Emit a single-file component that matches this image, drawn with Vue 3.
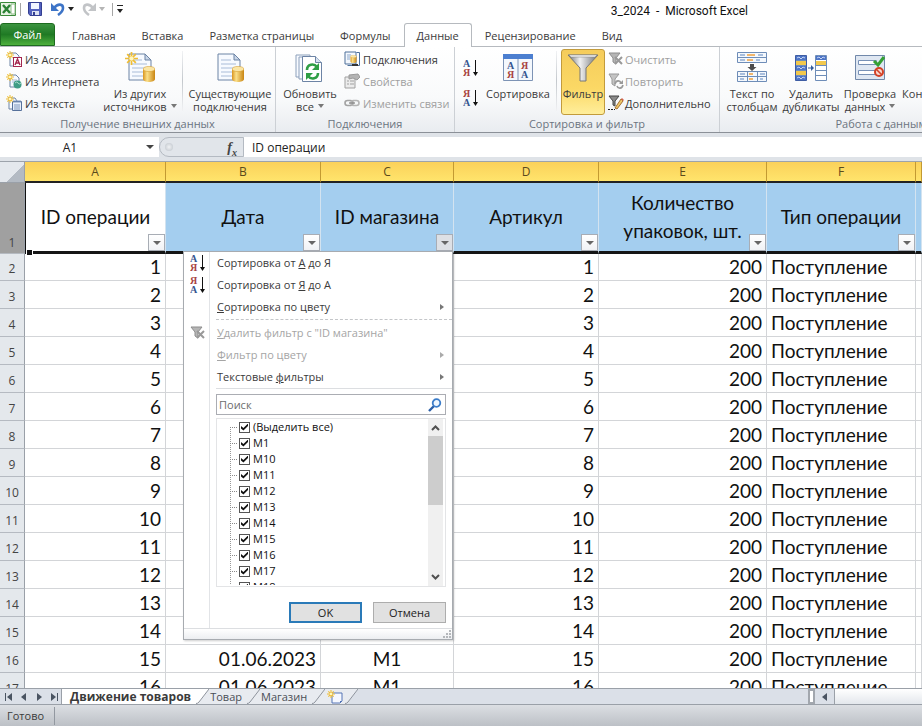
<template>
  <div class="app">
    <svg class="defs" aria-hidden="true">
      <linearGradient id="gold" x1="0" x2="1" y1="0" y2="0">
        <stop offset="0" stop-color="#d9951f" />
        <stop offset="0.35" stop-color="#fbe08a" />
        <stop offset="1" stop-color="#c98512" />
      </linearGradient>
      <linearGradient id="steel" x1="0" x2="1" y1="0" y2="0">
        <stop offset="0" stop-color="#6c6f73" />
        <stop offset="0.4" stop-color="#f1f1f1" />
        <stop offset="1" stop-color="#6f7276" />
      </linearGradient>
      <symbol id="sheet" viewBox="0 0 24 28">
        <path d="M1 1h16l6 6v20H1z" fill="#f7faff" stroke="#6d84a5" />
        <path d="M17 1v6h6z" fill="#c9d6e8" stroke="#6d84a5" />
        <path d="M4 7h10M4 11h15M4 15h15M4 19h15M4 23h15" stroke="#a9bcd8" />
      </symbol>
      <symbol id="cylinder" viewBox="0 0 12 16">
        <path d="M0 3v10c0 4 12 4 12 0V3z" fill="url(#gold)" />
        <ellipse cx="6" cy="3" rx="6" ry="2.6" fill="#fbe6a5" stroke="#d7a136" stroke-width="0.6" />
      </symbol>
      <symbol id="spark" viewBox="0 0 12 12">
        <path d="M6 0v12M0 6h12M2 2l8 8M10 2l-8 8" stroke="#efbd34" stroke-width="1.6" />
        <circle cx="6" cy="6" r="2" fill="#fff6bd" />
      </symbol>
      <symbol id="az" viewBox="0 0 16 18">
        <text x="0" y="8" class="glyph blue">А</text>
        <text x="0" y="17" class="glyph red">Я</text>
        <path d="M12.500 1v13" stroke="#111" />
        <path d="M10 13h5l-2.500 4z" fill="#111" />
      </symbol>
      <symbol id="za" viewBox="0 0 16 18">
        <text x="0" y="8" class="glyph red">Я</text>
        <text x="0" y="17" class="glyph blue">А</text>
        <path d="M12.500 1v13" stroke="#111" />
        <path d="M10 13h5l-2.500 4z" fill="#111" />
      </symbol>
      <symbol id="clear" viewBox="0 0 16 16">
        <path d="M1 2h11L8 7v6l-3-2V7z" fill="#b5b5b5" stroke="#8d8d8d" />
        <path d="M7 6l7 7M14 6l-7 7" stroke="#999" stroke-width="2" />
      </symbol>
      <symbol id="access" viewBox="0 0 16 16">
        <path d="M4 2h6l3 3v10H4z" fill="#f7faff" stroke="#6d84a5" />
        <rect x="7.500" y="6.500" width="8" height="9" fill="#fff" stroke="#a3274f" />
        <path d="M9 14l2.500-6L14 14M10 12h3" stroke="#a3274f" stroke-width="1.4" fill="none" />
        <use href="#spark" width="8" height="8" />
      </symbol>
      <symbol id="web" viewBox="0 0 16 16">
        <path d="M4 2h6l3 3v9H4z" fill="#f7faff" stroke="#6d84a5" />
        <path d="M6 7h5M6 9h4" stroke="#a9bcd8" />
        <circle cx="11.500" cy="11.500" r="4" fill="#3f9c86" />
        <path d="M9 10q2-2 3 0t3 0" stroke="#a9dccb" fill="none" />
        <use href="#spark" width="8" height="8" />
      </symbol>
      <symbol id="txt" viewBox="0 0 16 16">
        <path d="M3 3h6l2 3v8H3z" fill="#f7faff" stroke="#6d84a5" />
        <path d="M6.500 6.500h9v9h-9z" fill="#e8effa" stroke="#56719b" />
        <path d="M8 5v3M10 5v3M12 5v3M14 5v3M8 10h6M8 12h6M8 14h6" stroke="#7f97bd" />
        <use href="#spark" width="8" height="8" />
      </symbol>
      <symbol id="other" viewBox="0 0 32 32">
        <use href="#sheet" x="4" y="2" width="24" height="28" />
        <use href="#cylinder" x="19" y="15" width="12" height="16" />
        <use href="#spark" x="1" y="1" width="13" height="13" />
      </symbol>
      <symbol id="existing" viewBox="0 0 32 32">
        <use href="#sheet" x="3" y="2" width="24" height="28" />
        <use href="#cylinder" x="18" y="15" width="12" height="16" />
      </symbol>
      <symbol id="refresh" viewBox="0 0 32 32">
        <path d="M2 4h14v22H2z" fill="#f7faff" stroke="#8da0bb" />
        <path d="M5 6h14v22H5z" fill="#f7faff" stroke="#8da0bb" />
        <path d="M8.500 5.500h13l6 6v19h-19z" fill="#fff" stroke="#6d84a5" />
        <path d="M21.500 5.500v6h6" fill="#d7e2f0" stroke="#6d84a5" />
        <path d="M13 19c0-6 7-7 10-3" fill="none" stroke="#2f9e45" stroke-width="2.600" />
        <path d="M25 12v7h-7z" fill="#2f9e45" />
        <path d="M24 22c0 6-7 7-10 3" fill="none" stroke="#2f9e45" stroke-width="2.600" />
        <path d="M12 29v-7h7z" fill="#2f9e45" />
      </symbol>
      <symbol id="links" viewBox="0 0 16 16">
        <path d="M1 1h11v12H1z" fill="#f4f8fd" stroke="#4e719b" />
        <path d="M12.500 1.500h3v13h-12" fill="none" stroke="#4e719b" />
        <path d="M3 4h4M3 6h3M3 8h3" stroke="#8ea9cc" />
        <use href="#cylinder" x="6" y="4" width="7" height="8" />
        <path d="M8 14h6" stroke="#333" stroke-width="2" />
      </symbol>
      <symbol id="props" viewBox="0 0 16 16">
        <path d="M1 4h10v11H1z" fill="#ececec" stroke="#a1a1a1" />
        <path d="M3 8h2M6 8h4M3 11h2M6 11h4" stroke="#a1a1a1" />
        <path d="M5 2l9-1 2 3-3 3-4-2-4 1z" fill="#b4b4b4" stroke="#9a9a9a" />
      </symbol>
      <symbol id="chain" viewBox="0 0 16 16">
        <rect x="1" y="5.500" width="8" height="5" rx="2.500" fill="none" stroke="#a3a3a3" stroke-width="1.600" />
        <rect x="7" y="5.500" width="8" height="5" rx="2.500" fill="none" stroke="#b5b5b5" stroke-width="1.600" />
        <path d="M5 8h6" stroke="#8f8f8f" stroke-width="1.400" />
      </symbol>
      <symbol id="sort" viewBox="0 0 32 32">
        <path d="M1.500 3.500h29v26h-29z" fill="#f4f8fd" stroke="#7d93b5" />
        <path d="M1 3h30v5H1z" fill="#4c7fd0" />
        <path d="M16 8v21" stroke="#7d93b5" />
        <text x="5" y="18" class="glyph blue">А</text>
        <text x="5" y="27" class="glyph red">Я</text>
        <text x="19" y="18" class="glyph red">Я</text>
        <text x="19" y="27" class="glyph blue">А</text>
      </symbol>
      <symbol id="funnel" viewBox="0 0 32 32">
        <path d="M1 4h30L19 17v13h-6V17z" fill="url(#steel)" stroke="#777" />
        <path d="M2 4h28l-2 2H4z" fill="#fafafa" stroke="#8b8b8b" stroke-width="0.600" />
      </symbol>
      <symbol id="reapply" viewBox="0 0 16 16">
        <path d="M1 1h10L7 6v7l-3-2V6z" fill="#c4c4c4" stroke="#999" />
        <path d="M7 11c1-4 5-4 6-1M15 12c-1 4-5 4-6 1" stroke="#999" stroke-width="1.600" fill="none" />
        <path d="M15 7v4h-4z" fill="#999" />
      </symbol>
      <symbol id="advanced" viewBox="0 0 16 16">
        <path d="M1 1h10L7 6v5l-2-1V6z" fill="#8a8a8a" stroke="#444" />
        <path d="M7 13l6-9 2 2-6 8z" fill="#edc766" stroke="#a66f31" />
        <path d="M13 4l1-1 2 2-1 1z" fill="#d36250" />
        <path d="M0 14.500h7" stroke="#222" stroke-dasharray="2 1" />
      </symbol>
      <symbol id="columns" viewBox="0 0 32 32">
        <path d="M1.500 1.500h29v10h-29zM1.500 20.500h29v10h-29zM11.500 20v10M21.500 20v10M1 25.500h30M1 6.500h30" fill="#f4f8fd" stroke="#6e8db8" />
        <path d="M4 4h5M4 9h5M22 4h5M20 9h4M4 23h5M4 28h4M24 23h5M24 28h3" stroke="#5e85bd" />
        <path d="M11 4h8M11 9h6M13 23h4M13 28h4" stroke="#f0a03c" stroke-width="1.400" />
        <path d="M14 13h4v3h2.500L16 20l-4.500-4H14z" fill="#4c4c4c" />
      </symbol>
      <symbol id="dupes" viewBox="0 0 32 32">
        <path d="M.5 4.500h11v25H.5z" fill="#4d74c6" stroke="#3e5da4" />
        <path d="M1 10h10v4H1zM1 20h10v4H1z" fill="#f2c84d" />
        <path d="M20.500 4.500h11v25h-11z" fill="#fff" stroke="#6e8db8" />
        <path d="M21 5h10v4H21z" fill="#4d74c6" />
        <path d="M21 10h10v4H21z" fill="#f2c84d" />
        <path d="M21 14.500h10M21 19.500h10M21 24.500h10M1 9.500h10M1 14.500h10M1 19.500h10M1 24.500h10" stroke="#6e8db8" />
        <path d="M2 7l2-1 2 2 2-2 2 1M2 17l2-1 2 2 2-2 2 1M2 27l2-1 2 2 2-2 2 1M22 7l2-1 2 2 2-2 2 1" stroke="#c6d5f3" fill="none" />
        <path d="M13 17h4" stroke="#315b9d" />
        <path d="M16 14l3 3-3 3z" fill="#315b9d" />
      </symbol>
      <symbol id="check" viewBox="0 0 32 32">
        <path d="M1.500 4.500h29v24h-29z" fill="#dfe7f2" stroke="#7188aa" />
        <path d="M4.500 9.500h18v4h-18zM4.500 19.500h18v4h-18z" fill="#fff" stroke="#7891b6" />
        <path d="M20 10l4 4 6-8" fill="none" stroke="#35a035" stroke-width="3" />
        <circle cx="25" cy="21" r="4" fill="#f8d8d0" stroke="#d34126" stroke-width="2" />
        <path d="M22 18l6 6" stroke="#d34126" stroke-width="1.600" />
      </symbol>
    </svg>

    <header class="titlebar">
      <div class="quick">
        <svg class="logo" width="16" height="16" viewBox="0 0 16 16">
          <path d="M.5 1.500h15v13H.5z" fill="#e8f3e4" stroke="#3b8a3a" />
          <path d="M11 3h4v10h-4z" fill="#fff" stroke="#8cbc86" />
          <path d="M3 4l7 8M10 4l-7 8" stroke="#2b8234" stroke-width="2.400" />
        </svg>
        <span class="divider"></span>
        <button class="tool save" aria-label="Сохранить">
          <svg width="14" height="14" viewBox="0 0 14 14">
            <path d="M.5.500h13v13H2l-1.500-2z" fill="#5361bd" stroke="#343f91" />
            <path d="M3 1h8v6H3z" fill="#f1f5ff" />
            <path d="M4 9h7v4H4z" fill="#dce2f2" />
            <path d="M5 10h2v3H5z" fill="#343f91" />
          </svg>
        </button>
        <button class="tool" aria-label="Отменить">
          <svg width="14" height="14" viewBox="0 0 14 14">
            <path d="M3 6c4-5 9-4 9 0 0 3-2 5-5 7" fill="none" stroke="#3d74c7" stroke-width="2.600" />
            <path d="M0 1v8h8z" fill="#3d74c7" />
          </svg>
        </button>
        <span class="caret"></span>
        <button class="tool redo" aria-label="Вернуть">
          <svg width="14" height="14" viewBox="0 0 14 14">
            <path d="M11 6C7 1 2 2 2 6c0 3 2 5 5 7" fill="none" stroke="#c2c4c7" stroke-width="2.600" />
            <path d="M14 1v8H6z" fill="#c2c4c7" />
          </svg>
        </button>
        <span class="caret muted"></span>
        <span class="divider"></span>
        <button class="more" aria-label="Настройка панели"><span class="caret"></span></button>
      </div>
      <h1 class="title">3_2024&nbsp; -&nbsp; Microsoft Excel</h1>
    </header>

    <nav class="tabs">
      <button class="file">Файл</button>
      <button
        v-for="tab in tabs"
        :key="tab"
        class="tab"
        :class="{ active: tab === activeTab }"
        @click="activeTab = tab"
      >{{ tab }}</button>
    </nav>

    <section class="ribbon">
      <div v-for="group in groups" :key="group.title" class="group" :class="group.kind">
        <div class="tools">
          <div v-for="(part, i) in group.parts" :key="i" class="part" :class="part.kind">
            <button
              v-for="b in part.buttons"
              :key="b.icon"
              :class="[part.kind === 'big' ? 'large' : 'small', { pressed: b.pressed }]"
              :disabled="b.disabled"
              :aria-label="b.label"
            >
              <svg class="icon"><use :href="'#' + b.icon" /></svg>
              <span v-if="b.lines" class="caption">
                <span v-for="line in b.lines" :key="line" class="line">{{ line }}</span>
                <i v-if="b.menu" class="arrow"></i>
              </span>
            </button>
          </div>
        </div>
        <div class="group-title">{{ group.title }}</div>
      </div>
    </section>

    <div class="formula-bar">
      <input class="name-box" value="A1" aria-label="Имя" />
      <span class="caret name-caret"></span>
      <div class="fx-area">
        <span class="knob"></span>
        <button class="fx" aria-label="Вставить функцию">f<sub>x</sub></button>
      </div>
      <input class="formula" value="ID операции" aria-label="Строка формул" />
    </div>

    <main class="sheet">
      <table>
        <colgroup>
          <col class="w-num" />
          <col v-for="col in columns" :key="col.letter" :class="'w-' + col.letter.toLowerCase()" />
          <col />
        </colgroup>
        <thead>
          <tr class="letters">
            <th class="corner"></th>
            <th v-for="col in columns" :key="col.letter">{{ col.letter }}</th>
            <th></th>
          </tr>
        </thead>
        <tbody>
          <tr class="head">
            <th class="num">1</th>
            <td v-for="col in columns" :key="col.letter" :class="{ current: col.letter === 'A' }">
              {{ col.name }}
              <button
                class="filter"
                :class="{ open: openFilter === col.letter }"
                :aria-label="'Фильтр: ' + col.name"
                @click="toggleFilter(col.letter)"
              ><span class="arrow"></span></button>

              <div v-if="col.letter === 'C' && openFilter === 'C'" class="menu">
                <div class="menu-body">
                  <button class="item">
                    <svg class="item-icon"><use href="#az" /></svg>
                    <span>Сортировка от <u>А</u> до Я</span>
                  </button>
                  <button class="item">
                    <svg class="item-icon"><use href="#za" /></svg>
                    <span>Сортировка от <u>Я</u> до А</span>
                  </button>
                  <button class="item sub"><span><u>С</u>ортировка по цвету</span></button>
                  <hr class="dashed" />
                  <button class="item" disabled>
                    <svg class="item-icon"><use href="#clear" /></svg>
                    <span><u>У</u>далить фильтр с "ID магазина"</span>
                  </button>
                  <button class="item sub" disabled><span><u>Ф</u>ильтр по цвету</span></button>
                  <button class="item sub"><span>Текстовые <u>ф</u>ильтры</span></button>
                  <hr />
                  <div class="search">
                    <input v-model="query" type="text" placeholder="Поиск" aria-label="Поиск" />
                    <svg width="14" height="14" viewBox="0 0 14 14">
                      <path d="M1 13l5-5" stroke="#2b5fa8" stroke-width="2.400" />
                      <circle cx="8.500" cy="5" r="3.800" fill="#eef6ff" stroke="#3b7cc9" stroke-width="1.800" />
                    </svg>
                  </div>
                  <div class="list">
                    <div class="tree">
                      <label v-for="shop in visibleShops" :key="shop" class="node">
                        <input v-model="checked" type="checkbox" :value="shop" />
                        {{ shop }}
                      </label>
                    </div>
                    <div class="scroll">
                      <svg width="9" height="7" viewBox="0 0 9 7"><path d="M1 5l3.500-3.500L8 5" /></svg>
                      <span class="thumb"></span>
                      <svg width="9" height="7" viewBox="0 0 9 7"><path d="M1 2l3.500 3.500L8 2" /></svg>
                    </div>
                  </div>
                  <div class="actions">
                    <button class="ok">OK</button>
                    <button @click="openFilter = ''">Отмена</button>
                  </div>
                </div>
                <div class="menu-foot">
                  <svg width="8" height="8" viewBox="0 0 8 8">
                    <path d="M6 0h2v2H6zM3 3h2v2H3zM6 3h2v2H6zM0 6h2v2H0zM3 6h2v2H3zM6 6h2v2H6z" fill="#b4b7bb" />
                  </svg>
                </div>
              </div>
            </td>
            <td></td>
          </tr>
          <tr v-for="n in 16" :key="n" class="row">
            <th class="num">{{ n + 1 }}</th>
            <td class="right">{{ n }}</td>
            <td class="right">01.06.2023</td>
            <td class="center">М1</td>
            <td class="right">{{ n }}</td>
            <td class="right">200</td>
            <td>Поступление</td>
            <td></td>
          </tr>
        </tbody>
      </table>
    </main>

    <div class="sheet-tabs">
      <div class="nav">
        <button aria-label="Первый лист"><svg width="8" height="8" viewBox="0 0 8 8"><path d="M0 0h1v8H0zM7 0v8L2 4z" /></svg></button>
        <button aria-label="Предыдущий лист"><svg width="8" height="8" viewBox="0 0 8 8"><path d="M6 0v8L1 4z" /></svg></button>
        <button aria-label="Следующий лист"><svg width="8" height="8" viewBox="0 0 8 8"><path d="M2 0v8l5-4z" /></svg></button>
        <button aria-label="Последний лист"><svg width="8" height="8" viewBox="0 0 8 8"><path d="M7 0h1v8H7zM1 0v8l5-4z" /></svg></button>
      </div>
      <template v-for="name in sheets" :key="name">
        <button class="sheet-tab" :class="{ active: name === activeSheet }" @click="activeSheet = name">{{ name }}</button>
        <svg class="slant" :class="{ active: name === activeSheet }" width="13" height="15" viewBox="0 0 13 15">
          <path class="next" d="M0 0h13v15H0z" />
          <path class="fill" d="M0 0h13L3 13q-1 2-3 2z" />
          <path class="edge" d="M13 0L3 13q-1 1.500-3 1.500" />
        </svg>
      </template>
      <button class="new-sheet" aria-label="Вставить лист">
        <svg width="16" height="14" viewBox="0 0 16 14">
          <path d="M5 3h10v8l-2 2H5z" fill="#f5f8ff" stroke="#5475b5" />
          <path d="M15 11h-2v2z" fill="#5475b5" />
          <use href="#spark" width="8" height="8" />
        </svg>
      </button>
      <svg class="slant" width="13" height="15" viewBox="0 0 13 15">
        <path class="fill" d="M0 0h13L3 13q-1 2-3 2z" />
        <path class="edge" d="M13 0L3 13q-1 1.500-3 1.500" />
      </svg>
      <div class="spacer"></div>
      <div class="hscroll">
        <span class="splitter"></span>
        <button aria-label="Прокрутить влево"><svg width="8" height="8" viewBox="0 0 8 8"><path d="M6 0v8L1 4z" /></svg></button>
        <span class="track"></span>
      </div>
    </div>

    <footer class="status"><span>Готово</span></footer>
  </div>
</template>

<script setup>
import { ref, computed } from 'vue'

const tabs = ['Главная', 'Вставка', 'Разметка страницы', 'Формулы', 'Данные', 'Рецензирование', 'Вид']
const activeTab = ref('Данные')

const small = (icon, label, disabled = false) => ({ icon, label, lines: [label], disabled })
const large = (icon, lines, menu = false, pressed = false) => ({
  icon, lines, menu, pressed, label: lines.join(' ')
})

const groups = [
  {
    title: 'Получение внешних данных',
    kind: 'external',
    parts: [
      { kind: 'stack', buttons: [small('access', 'Из Access'), small('web', 'Из Интернета'), small('txt', 'Из текста')] },
      { kind: 'big', buttons: [large('other', ['Из других', 'источников'], true)] },
      { kind: 'rule', buttons: [] },
      { kind: 'big', buttons: [large('existing', ['Существующие', 'подключения'])] }
    ]
  },
  {
    title: 'Подключения',
    kind: 'connections',
    parts: [
      { kind: 'big', buttons: [large('refresh', ['Обновить', 'все'], true)] },
      { kind: 'stack', buttons: [small('links', 'Подключения'), small('props', 'Свойства', true), small('chain', 'Изменить связи', true)] }
    ]
  },
  {
    title: 'Сортировка и фильтр',
    kind: 'sorting',
    parts: [
      { kind: 'pair', buttons: [{ icon: 'az', label: 'По возрастанию' }, { icon: 'za', label: 'По убыванию' }] },
      { kind: 'big', buttons: [large('sort', ['Сортировка'])] },
      { kind: 'rule', buttons: [] },
      { kind: 'big', buttons: [large('funnel', ['Фильтр'], false, true)] },
      { kind: 'stack', buttons: [small('clear', 'Очистить', true), small('reapply', 'Повторить', true), small('advanced', 'Дополнительно')] }
    ]
  },
  {
    title: 'Работа с данными',
    kind: 'data',
    parts: [
      {
        kind: 'big',
        buttons: [
          large('columns', ['Текст по', 'столбцам']),
          large('dupes', ['Удалить', 'дубликаты']),
          large('check', ['Проверка', 'данных'], true),
          large('consolidate', ['Консолидация'])
        ]
      }
    ]
  }
]

const columns = [
  { letter: 'A', name: 'ID операции' },
  { letter: 'B', name: 'Дата' },
  { letter: 'C', name: 'ID магазина' },
  { letter: 'D', name: 'Артикул' },
  { letter: 'E', name: 'Количество упаковок, шт.' },
  { letter: 'F', name: 'Тип операции' }
]

const openFilter = ref('C')
const toggleFilter = (letter) => {
  openFilter.value = openFilter.value === letter ? '' : letter
}

const shops = ['(Выделить все)', 'М1', 'М10', 'М11', 'М12', 'М13', 'М14', 'М15', 'М16', 'М17', 'М18']
const checked = ref([...shops])
const query = ref('')
const visibleShops = computed(() => shops.filter((s) => s.toLowerCase().includes(query.value.toLowerCase())))

const sheets = ['Движение товаров', 'Товар', 'Магазин']
const activeSheet = ref('Движение товаров')
</script>

<style>
body {
  margin: 0;
}
</style>

<style scoped>
.app {
  display: flex;
  flex-direction: column;
  height: 100vh;
  overflow: hidden;
  background: #fff;
  color: #3b3b3b;
  font-family: "Open Sans", "Noto Sans", sans-serif;
  font-size: 11px;
  line-height: 13px;
}

.app * {
  box-sizing: border-box;
}

button,
input {
  margin: 0;
  padding: 0;
  border: none;
  outline: none;
  background: none;
  color: inherit;
  font: inherit;
}

.defs {
  position: absolute;
  width: 0;
  height: 0;
}

.glyph {
  font-family: "Liberation Serif", serif;
  font-size: 10px;
  font-weight: bold;
}

.glyph.blue {
  fill: #35558f;
}

.glyph.red {
  fill: #a8443f;
}

.caret,
.arrow {
  display: inline-block;
  flex-shrink: 0;
  width: 0;
  height: 0;
  border: 3px solid transparent;
  border-top: 4px solid #222;
  border-bottom: none;
}

.caret.muted {
  border-top-color: #b5b5b5;
}

/* title bar */
.titlebar {
  display: flex;
  align-items: center;
  flex-shrink: 0;
  height: 23px;
}

.quick {
  display: flex;
  align-items: center;
  align-self: flex-start;
  height: 18px;
}

.tool,
.logo,
.tool svg {
  display: block;
}

.divider {
  width: 1px;
  height: 13px;
  margin: 0 7px 0 4px;
  background: #a5a5a5;
}

.tool.save {
  margin-right: 9px;
}

.tool + .caret {
  margin-left: 3px;
}

.tool.redo {
  margin-left: 8px;
}

.caret.muted + .divider {
  margin-left: 7px;
  margin-right: 4px;
}

.more {
  display: flex;
  padding-top: 3px;
  border-top: 1px solid #222;
}

.title {
  flex: 1;
  margin: 0;
  padding-right: 174px;
  color: #111;
  font-family: Roboto, sans-serif;
  font-size: 12px;
  font-weight: normal;
  text-align: right;
}

/* ribbon tabs */
.tabs {
  display: flex;
  flex-shrink: 0;
  height: 24px;
  border-bottom: 1px solid #b6babf;
}

.tab {
  height: 24px;
  padding: 0 12px;
  border: 1px solid transparent;
  border-bottom: none;
  white-space: nowrap;
}

.tab.active {
  border-color: #b6babf;
  border-radius: 3px 3px 0 0;
  background: #fff;
}

.file {
  width: 55px;
  margin-right: 4px;
  border: 1px solid #1d6b1f;
  border-radius: 3px 3px 0 0;
  background: linear-gradient(#3c9440, #1f7a24 50%, #4db03c);
  color: #fff;
}

/* ribbon */
.ribbon {
  display: flex;
  flex-shrink: 0;
  height: 86px;
  overflow: hidden;
  border-bottom: 1px solid #8b9097;
  background: linear-gradient(#fff, #f9fafb 60%, #e9ecf0);
}

.group {
  display: flex;
  flex-direction: column;
  flex-shrink: 0;
  border-right: 1px solid #ccd0d5;
}

.group.external {
  width: 276px;
}

.group.connections {
  width: 179px;
}

.group.sorting {
  width: 265px;
}

.group.data {
  width: 330px;
}

.tools {
  display: flex;
  flex: 1;
  padding-top: 1px;
}

.group-title {
  height: 15px;
  color: #6b7480;
  text-align: center;
}

.part {
  display: flex;
}

.part.stack,
.part.pair {
  flex-direction: column;
}

.external .stack {
  width: 102px;
  padding-left: 6px;
}

.pair {
  width: 29px;
  padding: 5px 0 0 8px;
}

.part.rule {
  width: 1px;
  height: 60px;
  margin: 3px 4px;
  background: linear-gradient(#f1f2f4, #c4c8cd, #f1f2f4);
}

.small {
  display: flex;
  align-items: center;
  gap: 3px;
  height: 22px;
  white-space: nowrap;
}

.sorting .small {
  gap: 1px;
}

.small .icon {
  width: 16px;
  height: 16px;
  flex-shrink: 0;
}

.pair .small {
  height: 30px;
}

.pair .icon {
  height: 18px;
}

.small:disabled {
  color: #a0a0a0;
}

.large {
  display: flex;
  flex-direction: column;
  align-items: center;
  height: 66px;
  margin-top: 1px;
  padding-top: 1px;
  border: 1px solid transparent;
  border-radius: 3px;
}

.large .icon {
  width: 32px;
  height: 32px;
  margin-bottom: 4px;
  flex-shrink: 0;
}

.large .line {
  white-space: nowrap;
}

.large .line + .line::before {
  content: "\A";
  white-space: pre;
}

.large .arrow {
  margin: 0 0 3px 4px;
  border-top-color: #777;
}

.external .large {
  width: 76px;
}

.external .rule + .big .large {
  width: 86px;
}

.connections .large {
  width: 68px;
}

.sorting .large {
  width: 68px;
}

.sorting .large.pressed {
  width: 44px;
  margin-right: 3px;
  border-color: #c29b3c;
  background: linear-gradient(#f5cc5b, #fbd865 60%, #ffee9b);
}

.data .large {
  width: 54px;
}

.data .large:nth-child(odd) {
  width: 64px;
}

.data .large:last-child {
  width: 78px;
}

/* formula bar */
.formula-bar {
  display: flex;
  flex-shrink: 0;
  align-items: stretch;
  height: 29px;
  padding: 4px 0;
  border-bottom: 1px solid #9da3ab;
  background: #dfe3e8;
  color: #222;
  font-size: 12px;
}

.name-box {
  width: 146px;
  padding-right: 6px;
  background: #fff;
  text-align: center;
}

.name-caret {
  width: 13px;
  height: auto;
  border: none;
  background: #fff;
}

.name-caret::before {
  content: "";
  display: block;
  width: 0;
  margin-top: 8px;
  border: 4px solid transparent;
  border-top-color: #444;
  border-bottom: none;
}

.fx-area {
  display: flex;
  align-items: center;
  justify-content: space-between;
  width: 85px;
  padding: 0 6px 0 5px;
  border: 1px solid #b4bac2;
  border-radius: 10px 0 0 10px;
  background: #e1e5ea;
}

.knob {
  width: 8px;
  height: 8px;
  border-radius: 50%;
  background: radial-gradient(#f0f2f4, #bcc2c9);
}

.fx {
  color: #444;
  font-family: "Liberation Serif", serif;
  font-size: 14px;
  font-style: italic;
  font-weight: bold;
}

.fx sub {
  font-size: 10px;
  line-height: 1px;
}

.formula {
  flex: 1;
  min-width: 0;
  padding-left: 8px;
  background: #fff;
}

/* sheet */
.sheet {
  flex: 1;
  min-height: 0;
  overflow: hidden;
}

table {
  width: 100%;
  table-layout: fixed;
  border-spacing: 0;
  color: #111;
  font-family: Lato, "Open Sans", sans-serif;
  font-size: 19px;
  line-height: 26px;
}

th,
td {
  padding: 0;
  font-weight: normal;
}

.w-num {
  width: 25px;
}

.w-a {
  width: 141px;
}

.w-b {
  width: 155px;
}

.w-c {
  width: 133px;
}

.w-d {
  width: 145px;
}

.w-e {
  width: 168px;
}

.w-f {
  width: 149px;
}

.letters th {
  height: 21px;
  border-right: 1px solid #c39a32;
  border-bottom: 2px solid #222;
  background: linear-gradient(#fbd15a, #ffe46c);
  color: #5b4a1c;
  font-family: "Open Sans", sans-serif;
  font-size: 12px;
  line-height: 18px;
}

.letters .corner {
  border-right-color: #9aa0a8;
  border-bottom: 1px solid #9aa0a8;
  background: linear-gradient(135deg, #e4e8ed 60%, #b3bac3 60%);
}

.num {
  padding-top: 4px;
  border-right: 1px solid #9aa0a8;
  border-bottom: 1px solid #b5bac1;
  background: #e4e8ec;
  color: #444;
  font-family: "Open Sans", sans-serif;
  font-size: 12px;
  line-height: 20px;
}

.head td {
  position: relative;
  height: 71px;
  padding: 0 4px;
  border-right: 1px solid #d3e3f0;
  border-bottom: 3px solid #151515;
  background: #a4ceef;
  line-height: 28px;
  text-align: center;
}

.head .num {
  background: #a0a0a0;
  vertical-align: bottom;
}

.head td.current {
  border-left: 1px solid #111;
  background: #fff;
}

.head td.current::after {
  content: "";
  position: absolute;
  left: 0;
  bottom: -5px;
  width: 5px;
  height: 5px;
  border: 1px solid #fff;
  background: #111;
}

.filter {
  position: absolute;
  right: 0;
  bottom: 0;
  display: flex;
  align-items: center;
  justify-content: center;
  width: 17px;
  height: 17px;
  border: 1px solid #a8adb5;
  background: linear-gradient(#fff, #f0f2f5);
}

.filter.open {
  background: #dde0e5;
}

.filter .arrow {
  border-width: 4px 4px 0;
  border-top-color: #666;
}

.row th,
.row td {
  height: 28px;
}

.row td {
  padding: 0 4px;
  border-right: 1px solid #d3d5d8;
  border-bottom: 1px solid #d3d5d8;
}

.row:nth-child(2) th,
.row:nth-child(2) td {
  height: 27px;
}

.row .right {
  text-align: right;
}

.row .center {
  text-align: center;
}

/* filter menu */
.menu {
  position: absolute;
  z-index: 2;
  top: 100%;
  right: 0;
  width: 270px;
  border: 1px solid #a7abb0;
  background: #fff;
  box-shadow: 1px 1px 2px rgba(0, 0, 0, 0.2);
  color: #3b3b3b;
  font-family: "Open Sans", sans-serif;
  font-size: 11px;
  line-height: 16px;
  text-align: left;
}

.menu-body {
  padding: 0 6px 5px 32px;
  background: linear-gradient(#e2e4e7, #e2e4e7) 25px 0 / 1px 100% no-repeat;
}

.item {
  display: flex;
  align-items: center;
  position: relative;
  width: 100%;
  height: 22px;
  padding-left: 1px;
  text-align: left;
}

.item:disabled {
  color: #a5a5a5;
}

.item-icon {
  width: 16px;
  height: 18px;
  margin: 0 11px 0 -27px;
}

.item.sub::after {
  content: "";
  margin: 0 2px 0 auto;
  border: 3px solid transparent;
  border-left: 4px solid #777;
  border-right: none;
}

.item.sub:disabled::after {
  border-left-color: #aaa;
}

hr {
  margin: 0 -6px 0 0;
  border: none;
  border-top: 1px solid #dcdee1;
}

hr.dashed {
  margin: 1px -6px 2px 0;
  border-top: 1px dashed #c4c6c9;
}

.search {
  display: flex;
  align-items: center;
  height: 21px;
  margin-top: 5px;
  padding: 0 3px 0 2px;
  border: 1px solid #abadb3;
}

.search input {
  flex: 1;
  min-width: 0;
}

.search input::placeholder {
  color: #6d6d6d;
  opacity: 1;
}

.list {
  display: flex;
  height: 169px;
  margin-top: 3px;
  overflow: hidden;
  border: 1px solid #e3e4e6;
}

.tree {
  flex: 1;
  height: 166px;
  margin-left: 13px;
  overflow: hidden;
  background: repeating-linear-gradient(#999 0 1px, #fff 1px 2px) 0 8px / 1px 100% no-repeat;
}

.node {
  display: flex;
  align-items: center;
  gap: 3px;
  height: 16px;
  color: #111;
}

.node::before {
  content: "";
  width: 7px;
  border-top: 1px dotted #888;
}

.node input {
  appearance: none;
  display: grid;
  place-items: center;
  width: 11px;
  height: 11px;
  margin-left: -1px;
  border: 1px solid #555;
  background: #fff;
}

.node input:checked::after {
  content: "";
  width: 7px;
  height: 7px;
  background: #111;
  clip-path: polygon(0 35%, 35% 65%, 100% 0, 100% 35%, 35% 100%, 0 70%);
}

.scroll {
  display: flex;
  flex-direction: column;
  align-items: center;
  width: 15px;
  margin-right: 2px;
  padding: 6px 0;
  background: #f0f0f0;
}

.scroll svg {
  fill: none;
  stroke: #505050;
  stroke-width: 2;
}

.thumb {
  width: 15px;
  height: 69px;
  margin: 4px 0 auto;
  background: #cdcdcd;
}

.actions {
  display: flex;
  justify-content: flex-end;
  gap: 11px;
  margin-top: 15px;
}

.actions button {
  width: 73px;
  height: 21px;
  border: 1px solid #adadad;
  background: #e1e1e1;
  color: #222;
}

.actions .ok {
  border: 2px solid #2a7ab8;
}

.menu-foot {
  display: flex;
  align-items: flex-end;
  justify-content: flex-end;
  height: 11px;
  padding: 1px;
  border-top: 1px solid #dcdee1;
  background: linear-gradient(#fff, #eceef1);
}

/* sheet tabs */
.sheet-tabs {
  display: flex;
  flex-shrink: 0;
  height: 17px;
  border-top: 1px solid #9aa0a8;
  border-bottom: 1px solid #9aa0a8;
  background: #dbe0e8;
  line-height: 15px;
}

.nav {
  display: flex;
  width: 62px;
  padding-left: 1px;
  border-right: 1px solid #9aa0a8;
}

.nav button {
  width: 15px;
  text-align: center;
}

.nav svg,
.hscroll svg {
  fill: #4a5462;
}

.sheet-tab {
  padding: 0 5px 0 1px;
  background: #e8ebf0;
  color: #4a4f57;
  white-space: nowrap;
}

.sheet-tab.active {
  padding-left: 8px;
  background: #fff;
  color: #3b3b3b;
  font-size: 12px;
  font-weight: bold;
}

.slant {
  flex-shrink: 0;
  height: 15px;
}

.slant .fill,
.slant .next {
  fill: #e8ebf0;
}

.slant.active .fill {
  fill: #fff;
}

.slant .edge {
  fill: none;
  stroke: #8e949d;
}

.new-sheet {
  width: 20px;
  background: #e8ebf0;
}

.new-sheet svg {
  display: block;
  margin: auto;
}

.spacer {
  flex: 1;
}

.hscroll {
  display: flex;
  width: 114px;
}

.splitter {
  width: 7px;
  border: 2px solid #a2a7ae;
  background: #fff;
}

.hscroll button {
  width: 19px;
}

.track {
  flex: 1;
  border-left: 1px solid #9aa0a8;
  background: linear-gradient(#fff, #e3e7ec);
}

.status {
  display: flex;
  flex-shrink: 0;
  height: 21px;
  padding: 2px 0 1px;
  background: linear-gradient(#dcdfe3, #bcc0c6);
}

.status span {
  padding: 2px 10px 0 7px;
  border-right: 1px solid #9298a0;
}
</style>
